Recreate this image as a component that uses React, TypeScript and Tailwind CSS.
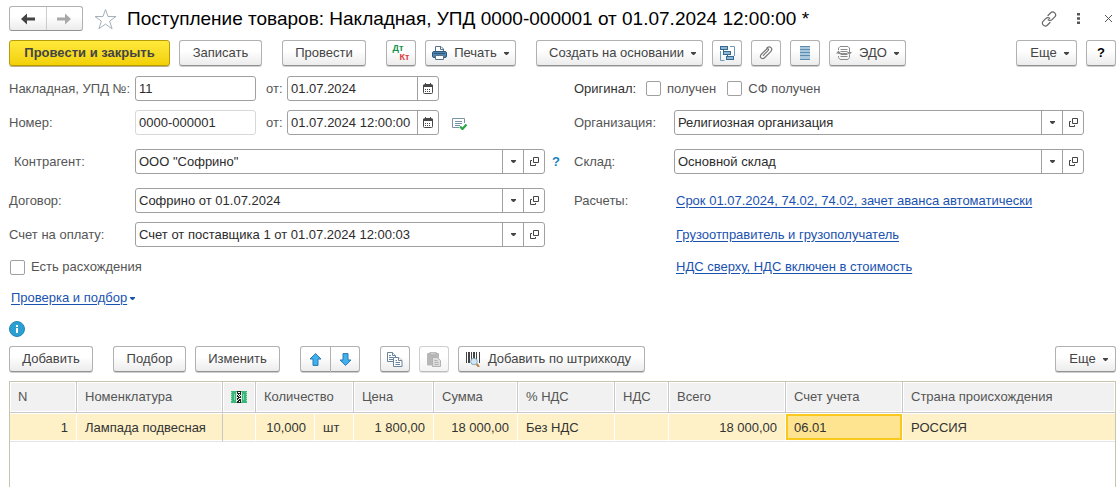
import type { ReactNode } from 'react';

type Kids = { children?: ReactNode };

const rowGrid = 'grid grid-cols-[126px_minmax(0,1fr)_29px_100px_minmax(0,1fr)] items-center';
const btnBase =
  'flex h-[26px] shrink-0 items-center justify-center whitespace-nowrap rounded-[3px] border border-[#b1b1b1] border-b-[#929292] bg-linear-to-b from-white from-40% to-[#ececec] text-[#444] shadow-[0_1px_0_#cfcfcf]';

function Btn({ children, className = '', label, disabled }: Kids & { className?: string; label?: string; disabled?: boolean }) {
  return (
    <button type="button" aria-label={label} disabled={disabled} className={`${btnBase} ${className}`}>
      {children}
    </button>
  );
}

function Caret({ className = 'text-[#444]' }: { className?: string }) {
  return (
    <svg width="5" height="3" viewBox="0 0 5 3" className={className} aria-hidden="true">
      <path d="M0 0h5v1L3 3H2L0 1z" fill="currentColor" />
    </svg>
  );
}

function ArrowIcon({ dir, className }: { dir: 'left' | 'right'; className: string }) {
  return (
    <svg width="14" height="12" viewBox="0 0 14 12" className={className} aria-hidden="true">
      <path
        d={dir === 'left' ? 'M0 6 6 .500 6 4.500h8v3H6v4z' : 'M14 6 8 .500 8 4.500H0v3h8v4z'}
        fill="currentColor"
      />
    </svg>
  );
}

function MoveIcon({ down }: { down?: boolean }) {
  return (
    <svg width="13" height="13" viewBox="0 0 13 13" aria-hidden="true">
      <path
        d={down ? 'M6.5 12.4 1 7h3V.6h5V7h3z' : 'M6.5.6 1 6h3v6.4h5V6h3z'}
        fill="#41b1ee"
        stroke="#2a78b0"
        strokeWidth="1"
        strokeLinejoin="round"
      />
    </svg>
  );
}

function PrinterIcon() {
  return (
    <svg width="15" height="15" viewBox="0 0 15 15" aria-hidden="true">
      <path d="M3.500 5V.500h5.500l2.500 2.500v2" fill="#fff" stroke="#5b7285" />
      <path d="M8.500 .500V3.500h3" fill="none" stroke="#5b7285" />
      <rect x="0.500" y="5.500" width="14" height="6" rx="1.500" fill="#4e86b4" stroke="#2c5778" />
      <path d="M2 7.500h11" stroke="#2c5778" />
      <path d="M3.500 9.500h8v4h-8z" fill="#fff" stroke="#5b7285" />
    </svg>
  );
}

function StructureIcon() {
  return (
    <svg width="15" height="15" viewBox="0 0 15 15" aria-hidden="true">
      <path d="M.500 5v9.500h4M10 .500h4.500V10" fill="none" stroke="#6f9bbb" />
      <path d="M3.500 4v3.500M7.500 8.500v3" fill="none" stroke="#35698f" />
      <rect x=".500" y=".500" width="7" height="3" fill="#8db7d4" stroke="#35698f" />
      <rect x="3.500" y="5.500" width="7" height="3" fill="#8db7d4" stroke="#35698f" />
      <rect x="6.500" y="10.500" width="7" height="3" fill="#8db7d4" stroke="#35698f" />
    </svg>
  );
}

function ClipIcon() {
  return (
    <svg width="14" height="14" viewBox="0 0 14 14" aria-hidden="true">
      <path
        d="M4.300 9.300 9 4.600c1.400-1.400-.2-2.700-1.300-1.600L2.400 8.200c-2.800 2.800.6 6 3.400 3.300l5.700-5.700C14.600 2.700 10.900-.9 7.900 2"
        fill="none"
        stroke="#777"
        strokeWidth="1.200"
        strokeLinecap="round"
      />
    </svg>
  );
}

function ListIcon() {
  return (
    <svg width="10" height="14" viewBox="0 0 10 14" aria-hidden="true">
      <rect width="10" height="14" fill="#a9c8dd" />
      <path d="M0 .500h10M0 3.500h10M0 6.500h10M0 9.500h10M0 13.500h10" stroke="#5d8cae" />
    </svg>
  );
}

function EdoIcon() {
  return (
    <svg width="16" height="14" viewBox="0 0 16 14" fill="none" stroke="#8b8b8b" aria-hidden="true">
      <path d="M2.500 4V2L4 .500h8l1.500 1.500v4M2.500 10v1.500l1.500 2h8l1.500-2V9" />
      <path d="M4.500 3.500h7M4.500 5.500h7M4.500 8.500h7M4.500 10.500h7" />
      <path d="M2.500 6v1.500h9M13.500 6v1.500" />
      <path d="m0 7.500 2.500-3 2.500 3zM11 6l2.500 3L16 6z" fill="#8b8b8b" stroke="none" />
    </svg>
  );
}

function CalendarIcon() {
  return (
    <svg width="10" height="11" viewBox="0 0 10 11" aria-hidden="true">
      <rect x=".5" y="1.500" width="9" height="9" rx="1" fill="#fff" stroke="#484848" />
      <path d="M0 2h10v2H0z" fill="#484848" />
      <path d="M2.500 0v3M7.500 0v3" stroke="#484848" />
      <path d="M2 6.500h6M2 8.500h6" stroke="#484848" strokeDasharray="1 1" />
    </svg>
  );
}

function OpenIcon() {
  return (
    <svg width="9" height="9" viewBox="0 0 9 9" fill="none" stroke="#444" aria-hidden="true">
      <path d="M3.500 .500h5v5h-5z" />
      <path d="M2 3.500H.500v5h5V7" />
    </svg>
  );
}

function StatusIcon() {
  return (
    <svg width="16" height="14" viewBox="0 0 16 14" fill="none" aria-hidden="true">
      <path d="M7 11.500H.500v-9h12V7" stroke="#7894a8" />
      <path d="M3 5.500h7M3 7.500h7M3 9.500h5" stroke="#7894a8" />
      <path d="m8 10.500 2.500 2.500 4-4.500" stroke="#25a845" strokeWidth="2.200" />
    </svg>
  );
}

function CopyIcon() {
  return (
    <svg width="16" height="15" viewBox="0 0 16 15" fill="#fff" stroke="#68839a" aria-hidden="true">
      <path d="M.5.5h5l3 3v6h-8z" />
      <path d="M5.500 .500v3h3M2 3.500h2M2 5.500h4M2 7.500h4" />
      <path d="M6.500 5.500h5l3.500 3v6H6.500z" />
      <path d="M11.500 5.500v3H15M8.500 8.500h1.500M8.500 10.500h4.500M8.500 12.500h4.500" />
    </svg>
  );
}

function PasteIcon() {
  return (
    <svg width="15" height="15" viewBox="0 0 15 15" aria-hidden="true">
      <rect x="0" y="1" width="12" height="12.500" rx="1" fill="#888" />
      <path d="M3 0h6v3H3z" fill="#aaa" stroke="#7b7b7b" />
      <path d="M5.500 5.500h5l3 3v6h-8z" fill="#c8c8c8" stroke="#7f7f7f" />
      <path d="M7.500 8.500h3M7.500 10.500h4M7.500 12.500h4" stroke="#7f7f7f" />
    </svg>
  );
}

function BarcodeIcon() {
  return (
    <svg width="15" height="15" viewBox="0 0 15 15" aria-hidden="true">
      <path d="M.500 0v11M5.500 0v11M10.500 0v9M13.500 0v11" stroke="#444" />
      <path d="M3 0v11M8 0v8" stroke="#444" strokeWidth="2" />
      <path d="m10.500 12 2.500 3" stroke="#c08440" strokeWidth="2" />
      <circle cx="8" cy="9.500" r="3.300" fill="#cfe6f7" stroke="#8ba9bd" />
    </svg>
  );
}

function MarkingIcon() {
  return (
    <svg width="16" height="12" viewBox="0 0 16 12" aria-hidden="true">
      <rect width="16" height="12" fill="#3bb878" />
      <path d="M.500 1v10M15.500 1v10" stroke="#a5dfc0" strokeDasharray="1 1" />
      <path d="M3 3h1v6H3zM12 3h1v6h-1z" fill="#8ad8ae" />
      <path d="M5 1h1v10H5zM10 1h1v10h-1z" fill="#c9eed9" />
      <path d="M6 0h4v12H6z" fill="#222" />
      <path d="M7 1h2v1H7zM6 3h1v1H6zM8 3h1v1H8zM7 4h1v1H7zM9 4h1v1H9zM8 5h1v1H8zM6 6h1v1H6zM8 7h2v1H8zM7 8h1v1H7zM6 9h1v1H6zM8 10h1v1H8z" fill="#fff" />
    </svg>
  );
}

function Label({ htmlFor, children, className = '' }: Kids & { htmlFor?: string; className?: string }) {
  return (
    <label htmlFor={htmlFor} className={`whitespace-nowrap text-[#555] ${className}`}>
      {children}
    </label>
  );
}

const box = 'h-[25px] rounded-[3px] border border-[#a0a0a0] bg-white';
const sideBtn = 'flex w-[21px] shrink-0 items-center justify-center border-l border-[#a0a0a0]';

function Combo({ id, value }: { id: string; value: string }) {
  return (
    <div className={`flex ${box}`}>
      <div className="relative flex min-w-0 flex-1">
        <select id={id} defaultValue={value} className="w-full appearance-none bg-transparent pr-6 pl-[3px] text-[#2c2c2c] outline-none">
          <option>{value}</option>
        </select>
        <span className={`pointer-events-none absolute inset-y-0 right-0 ${sideBtn}`}>
          <Caret />
        </span>
      </div>
      <button type="button" aria-label="Открыть" className={sideBtn}>
        <OpenIcon />
      </button>
    </div>
  );
}

function DateField({ id, value }: { id: string; value: string }) {
  return (
    <div className={`flex w-[152px] ${box}`}>
      <input id={id} defaultValue={value} className="min-w-0 flex-1 pl-[3px] text-[#2c2c2c] outline-none" />
      <button type="button" aria-label="Выбрать дату" className={sideBtn}>
        <CalendarIcon />
      </button>
    </div>
  );
}

function Check({ children }: Kids) {
  return (
    <label className="flex items-center gap-[6px] whitespace-nowrap text-[#555]">
      <input type="checkbox" className="size-[15px] appearance-none rounded-[2px] border border-[#a0a0a0] bg-white" />
      {children}
    </label>
  );
}

function Link({ children }: Kids) {
  return (
    <a href="#" className="ml-[2px] whitespace-nowrap text-[#1a52b0] underline underline-offset-2">
      {children}
    </a>
  );
}

function Th({ children, span }: Kids & { span?: number }) {
  return (
    <th colSpan={span} className="h-[31px] border-r border-b border-[#c8c8c8] bg-[#f1f1f1] px-2 text-left font-normal text-[#555] shadow-[inset_0_0_0_1px_#fff] last:border-r-0">
      {children}
    </th>
  );
}

const plainCell = 'bg-[#fef1c7] shadow-[inset_0_-1px_0_#fff]';
const activeCell = 'bg-[#fee491] shadow-[inset_0_-1px_0_#fff,inset_0_-3px_0_#fbc91e,inset_0_0_0_2px_#fbc91e]';

function Td({ children, className = 'border-r-white', active }: Kids & { className?: string; active?: boolean }) {
  return (
    <td
      className={`h-[29px] overflow-hidden border-t border-r border-b border-t-white border-b-[#e4e4e4] px-2 whitespace-nowrap last:border-r-0 ${active ? activeCell : plainCell} ${className}`}
    >
      {children}
    </td>
  );
}

export default function App() {
  return (
    <main className="flex min-h-screen flex-col bg-white pt-[6px] pr-[3px] pl-[9px] font-['Liberation_Sans',Arial,sans-serif] text-[13px] leading-4 text-[#333]">
      <header className="flex h-[25px] items-center">
        <div className="flex h-[25px] w-[74px] rounded-[3px] border border-[#b1b1b1] border-b-[#929292] bg-linear-to-b from-white from-40% to-[#ececec]">
          <button type="button" aria-label="Назад" className="flex flex-1 items-center justify-center border-r border-[#ccc]">
            <ArrowIcon dir="left" className="text-[#444]" />
          </button>
          <button type="button" aria-label="Вперед" className="flex flex-1 items-center justify-center">
            <ArrowIcon dir="right" className="text-[#a8a8a8]" />
          </button>
        </div>
        <button type="button" aria-label="В избранное" className="ml-[11px]">
          <svg width="23" height="22" viewBox="0 0 23 22" aria-hidden="true">
            <path d="m11.500 1.500 2.500 7h8l-6.400 4.600 2.500 7.700-6.600-4.700-6.600 4.700 2.500-7.700L1 8.500h8z" fill="#fff" stroke="#a5afb8" />
          </svg>
        </button>
        <h1 className="ml-[10px] flex-1 text-[19px] leading-6 whitespace-nowrap text-black">
          Поступление товаров: Накладная, УПД 0000-000001 от 01.07.2024 12:00:00 *
        </h1>
        <div className="flex items-center pr-[3px]">
          <button type="button" aria-label="Получить ссылку">
            <svg width="16" height="16" viewBox="0 0 16 16" fill="none" stroke="#666" strokeWidth="1.200" strokeLinecap="round" aria-hidden="true">
              <path d="M7 4.500 9.500 2c2.800-2.800 6.900 1.100 4.300 3.900L11.300 8.400C10 9.700 8.300 9.500 7.300 8.700M9 11.500 6.500 14c-2.800 2.800-6.900-1.100-4.300-3.900L4.700 7.600C6 6.300 7.700 6.500 8.700 7.300" />
            </svg>
          </button>
          <button type="button" aria-label="Меню" className="ml-[18px] flex w-[6px] justify-center">
            <svg width="3" height="11" viewBox="0 0 3 11" fill="#555" aria-hidden="true">
              <path d="M0 0h3v2.500H0zM0 4.250h3v2.500H0zM0 8.500h3V11H0z" />
            </svg>
          </button>
          <button type="button" aria-label="Закрыть" className="ml-[23px]">
            <svg width="9" height="9" viewBox="0 0 9 9" stroke="#555" aria-hidden="true">
              <path d="m1 1 7 7M8 1 1 8" />
            </svg>
          </button>
        </div>
      </header>

      <div className="mt-[9px] flex gap-[9px]">
        <button type="button" className="flex h-[26px] w-[161px] items-center justify-center rounded-[3px] border border-[#b89b08] bg-linear-to-b from-[#ffe939] to-[#f2d100] font-bold whitespace-nowrap text-[#444] shadow-[0_1px_0_#b9b08a]">
          Провести и закрыть
        </button>
        <Btn className="w-[83px]">Записать</Btn>
        <Btn className="ml-[11px] w-[84px]">Провести</Btn>
        <Btn className="ml-[11px] w-[30px]" label="Дт Кт">
          <span className="flex w-[17px] flex-col text-[9px] leading-[9px] font-bold">
            <span className="self-start text-[#149048]">Дт</span>
            <span className="self-end text-[#dd3b3b]">Кт</span>
          </span>
        </Btn>
        <Btn className="w-[91px] gap-[7px]">
          <PrinterIcon />
          Печать
          <Caret />
        </Btn>
        <Btn className="ml-[11px] w-[167px] gap-[7px] pl-[6px]">
          Создать на основании
          <Caret />
        </Btn>
        <Btn className="w-[30px]" label="Структура подчиненности">
          <StructureIcon />
        </Btn>
        <Btn className="w-[30px]" label="Присоединенные файлы">
          <ClipIcon />
        </Btn>
        <Btn className="w-[30px]" label="Список">
          <ListIcon />
        </Btn>
        <Btn className="w-[77px] gap-[7px]">
          <EdoIcon />
          ЭДО
          <Caret />
        </Btn>
        <Btn className="ml-auto w-[61px] gap-[7px] pl-[6px]">
          Еще
          <Caret />
        </Btn>
        <Btn className="w-[30px] font-bold text-black">?</Btn>
      </div>

      <form className="mt-[10px] flex flex-col gap-[14px] pr-8">
        <div className="flex flex-col gap-[9px]">
          <div className={rowGrid}>
            <Label htmlFor="invoice">Накладная, УПД №:</Label>
            <div className="flex items-center">
              <input id="invoice" defaultValue="11" className={`w-[121px] pl-[3px] text-[#2c2c2c] ${box}`} />
              <Label htmlFor="invoiceDate" className="w-[31px] pl-[10px]">от:</Label>
              <DateField id="invoiceDate" value="01.07.2024" />
            </div>
            <span />
            <div className="col-span-2 flex items-center">
              <span className="w-[72px] text-[#333]">Оригинал:</span>
              <Check>получен</Check>
              <span className="w-[11px]" />
              <Check>СФ получен</Check>
            </div>
          </div>
          <div className={rowGrid}>
            <Label htmlFor="number">Номер:</Label>
            <div className="flex items-center">
              <input id="number" readOnly defaultValue="0000-000001" className="h-[25px] w-[121px] rounded-[3px] border border-[#d8d8d8] pl-[3px] text-[#2c2c2c]" />
              <Label htmlFor="numberDate" className="w-[31px] pl-[10px]">от:</Label>
              <DateField id="numberDate" value="01.07.2024 12:00:00" />
              <span className="ml-[13px]">
                <StatusIcon />
              </span>
            </div>
            <span />
            <Label htmlFor="org">Организация:</Label>
            <Combo id="org" value="Религиозная организация" />
          </div>
        </div>

        <div className={rowGrid}>
          <Label htmlFor="partner" className="pl-[5px]">Контрагент:</Label>
          <Combo id="partner" value={'ООО "Софрино"'} />
          <button type="button" className="pl-[7px] text-left font-bold text-[#1b7fc0]">?</button>
          <Label htmlFor="store">Склад:</Label>
          <Combo id="store" value="Основной склад" />
        </div>

        <div className="flex flex-col gap-[9px]">
          <div className={rowGrid}>
            <Label htmlFor="contract">Договор:</Label>
            <Combo id="contract" value="Софрино от 01.07.2024" />
            <span />
            <Label>Расчеты:</Label>
            <Link>Срок 01.07.2024, 74.02, 74.02, зачет аванса автоматически</Link>
          </div>
          <div className={rowGrid}>
            <Label htmlFor="bill">Счет на оплату:</Label>
            <Combo id="bill" value="Счет от поставщика 1 от 01.07.2024 12:00:03" />
            <span />
            <span />
            <Link>Грузоотправитель и грузополучатель</Link>
          </div>
          <div className={`h-[22px] ${rowGrid}`}>
            <div className="col-span-2 pl-[1px]">
              <Check>Есть расхождения</Check>
            </div>
            <span />
            <span />
            <Link>НДС сверху, НДС включен в стоимость</Link>
          </div>
          <div className="flex h-[22px] items-center gap-[3px]">
            <Link>Проверка и подбор</Link>
            <Caret className="text-[#1a52b0]" />
          </div>
        </div>
      </form>

      <svg width="16" height="16" viewBox="0 0 16 16" className="mt-3 shrink-0" role="img" aria-label="Информация">
        <circle cx="8" cy="8" r="7.500" fill="#2a9fd2" stroke="#2588b6" />
        <path d="M7 4h2v2H7zM7 7h2v5H7z" fill="#fff" />
      </svg>

      <div className="mt-[9px] flex">
        <Btn className="w-[84px]">Добавить</Btn>
        <Btn className="ml-5 w-[73px]">Подбор</Btn>
        <Btn className="ml-[9px] w-[85px]">Изменить</Btn>
        <div className="ml-5 flex">
          <Btn className="w-[31px] rounded-r-none" label="Переместить вверх">
            <MoveIcon />
          </Btn>
          <Btn className="w-[29px] rounded-l-none border-l-0" label="Переместить вниз">
            <MoveIcon down />
          </Btn>
        </div>
        <Btn className="ml-5 w-[30px]" label="Копировать">
          <CopyIcon />
        </Btn>
        <Btn className="ml-[9px] w-[30px] opacity-60" label="Вставить" disabled>
          <PasteIcon />
        </Btn>
        <Btn className="ml-[9px] w-[187px] gap-[7px] pr-[6px]">
          <BarcodeIcon />
          Добавить по штрихкоду
        </Btn>
        <Btn className="ml-auto w-[61px] gap-[7px] pl-[6px]">
          Еще
          <Caret />
        </Btn>
      </div>

      <section className="mt-[9px] flex-1 border-x border-t border-[#c9c4ae]">
        <table className="w-full table-fixed border-separate border-spacing-0">
          <colgroup>
            <col className="w-[67px]" />
            <col className="w-[146px]" />
            <col className="w-[33px]" />
            <col className="w-[59px]" />
            <col className="w-[39px]" />
            <col className="w-[80px]" />
            <col className="w-[84px]" />
            <col className="w-[97px]" />
            <col className="w-[54px]" />
            <col className="w-[117px]" />
            <col className="w-[117px]" />
            <col />
          </colgroup>
          <thead>
            <tr>
              <Th>N</Th>
              <Th>Номенклатура</Th>
              <Th>
                <MarkingIcon />
              </Th>
              <Th span={2}>Количество</Th>
              <Th>Цена</Th>
              <Th>Сумма</Th>
              <Th>% НДС</Th>
              <Th>НДС</Th>
              <Th>Всего</Th>
              <Th>Счет учета</Th>
              <Th>Страна происхождения</Th>
            </tr>
          </thead>
          <tbody>
            <tr>
              <Td className="border-r-white text-right">1</Td>
              <Td className="border-r-[#c8c8c8]">Лампада подвесная</Td>
              <Td />
              <Td className="border-r-white text-right">10,000</Td>
              <Td>шт</Td>
              <Td className="border-r-white text-right">1 800,00</Td>
              <Td className="border-r-white text-right">18 000,00</Td>
              <Td>Без НДС</Td>
              <Td />
              <Td className="border-r-white text-right">18 000,00</Td>
              <Td active>06.01</Td>
              <Td>РОССИЯ</Td>
            </tr>
          </tbody>
        </table>
      </section>
    </main>
  );
}
